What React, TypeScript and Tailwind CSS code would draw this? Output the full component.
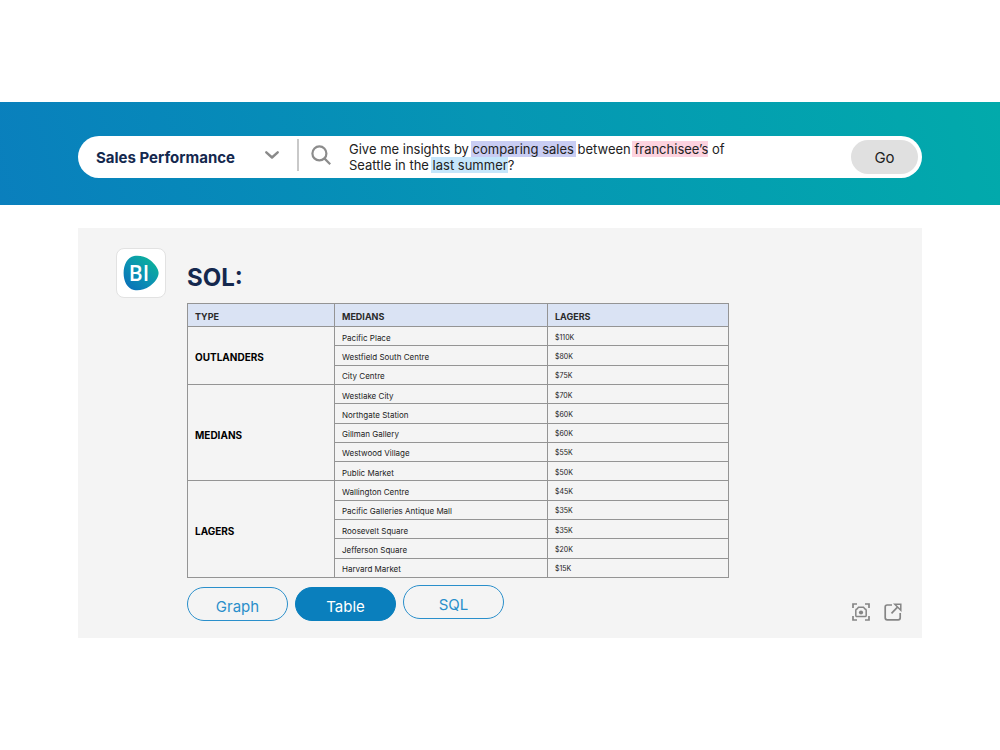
const groups = [
  {
    name: "OUTLANDERS",
    rows: [
      ["Pacific Place", "$110K"],
      ["Westfield South Centre", "$80K"],
      ["City Centre", "$75K"],
    ],
  },
  {
    name: "MEDIANS",
    rows: [
      ["Westlake City", "$70K"],
      ["Northgate Station", "$60K"],
      ["Gillman Gallery", "$60K"],
      ["Westwood Village", "$55K"],
      ["Public Market", "$50K"],
    ],
  },
  {
    name: "LAGERS",
    rows: [
      ["Wallington Centre", "$45K"],
      ["Pacific Galleries Antique Mall", "$35K"],
      ["Roosevelt Square", "$35K"],
      ["Jefferson Square", "$20K"],
      ["Harvard Market", "$15K"],
    ],
  },
];

function QueryBox() {
  return (
    <div
      role="textbox"
      aria-label="Question"
      aria-multiline="true"
      contentEditable
      suppressContentEditableWarning
      spellCheck={false}
      className="w-full max-w-[400px] text-[13px] leading-4 text-[#222] outline-none"
    >
      Give me insights by{" "}
      <mark className="bg-[#c9cdf3] text-inherit shadow-[-2px_0_0_#c9cdf3,2px_0_0_#c9cdf3]">
        comparing sales
      </mark>{" "}
      between{" "}
      <mark className="bg-[#fdd3df] text-inherit shadow-[-2px_0_0_#fdd3df]">franchisee’s</mark> of
      Seattle in the{" "}
      <mark className="bg-[#c5e6fb] text-inherit shadow-[-2px_0_0_#c5e6fb]">last summer</mark>?
    </div>
  );
}

function SearchBar() {
  return (
    <header className="bg-linear-75 from-[#0a7fbd] via-[#0696b4] to-[#02aaab] px-[78px] pt-[34px] pb-[27px]">
      <form
        onSubmit={(e) => e.preventDefault()}
        className="flex h-[42px] items-center rounded-full bg-white pr-1 pl-[18px]"
      >
        <div className="grid w-[183px] shrink-0 items-center">
          <select
            aria-label="Report"
            className="col-start-1 row-start-1 w-full appearance-none bg-transparent pt-0.5 text-[15px] leading-5 font-bold text-[#14284e] outline-none"
          >
            <option>Sales Performance</option>
          </select>
          <svg
            aria-hidden="true"
            viewBox="0 0 14 8"
            className="pointer-events-none col-start-1 row-start-1 mb-1 h-2 w-3.5 justify-self-end"
            fill="none"
            stroke="#8a8a8a"
            strokeWidth="2.4"
            strokeLinecap="round"
            strokeLinejoin="round"
          >
            <path d="M1.3 1.3 7 6.5 12.7 1.3" />
          </svg>
        </div>
        <div className="mb-1 ml-[18px] h-8 w-0.5 shrink-0 bg-[#c9c9c9]" />
        <svg
          aria-hidden="true"
          viewBox="0 0 20 20"
          className="mr-[18px] mb-1 ml-3 h-5 w-5 shrink-0"
          fill="none"
          stroke="#8c8c8c"
          strokeWidth="2.2"
        >
          <circle cx="8.4" cy="8.4" r="7" />
          <path d="m13.4 13.4 5.8 5.8" />
        </svg>
        <div className="min-w-0 flex-1">
          <QueryBox />
        </div>
        <button
          type="submit"
          className="h-[34px] w-[67px] shrink-0 rounded-full bg-[#e0e0e0] pt-0.5 text-[15px] text-[#222]"
        >
          Go
        </button>
      </form>
    </header>
  );
}

function Logo() {
  return (
    <div className="flex h-[50px] w-[50px] shrink-0 items-center justify-center rounded-lg border border-[#e2e2e2] bg-white">
      <svg viewBox="0 0 36 36" className="h-9 w-9" role="img" aria-label="BI">
        <defs>
          <linearGradient id="blob" x1="0.1" y1="0.9" x2="0.8" y2="0.1">
            <stop offset="0" stopColor="#0a72b8" />
            <stop offset="0.5" stopColor="#0b92b3" />
            <stop offset="1" stopColor="#0cb09b" />
          </linearGradient>
        </defs>
        <path
          d="M11 1C16 0.2 22 1.2 27 5C32 9 35.6 14 35.6 18C35.6 22 32 27.5 27 31C21.5 34.8 15.5 36 11 35C4 33.5 0.6 26 0.6 18C0.6 9.5 4.5 2.2 11 1Z"
          fill="url(#blob)"
        />
        <text
          x="16"
          y="25.5"
          textAnchor="middle"
          fill="#fff"
          className="font-['Open_Sans',sans-serif] text-[21px] font-semibold"
        >
          BI
        </text>
      </svg>
    </div>
  );
}

function SalesTable() {
  return (
    <table className="h-[275px] w-full max-w-[542px] table-fixed border-collapse text-left text-[#222]">
      <colgroup>
        <col className="w-[147px]" />
        <col className="w-[213px]" />
        <col />
      </colgroup>
      <thead>
        <tr className="h-[23px] bg-[#dae3f4] text-[9px] leading-3 font-bold text-[#2a2a2a]">
          {["TYPE", "MEDIANS", "LAGERS"].map((head) => (
            <th key={head} scope="col" className="border border-[#949494] px-[7px] pt-1">
              {head}
            </th>
          ))}
        </tr>
      </thead>
      {groups.map((group) => (
        <tbody key={group.name}>
          {group.rows.map(([place, value], i) => (
            <tr key={place} className="leading-[10px]">
              {i === 0 && (
                <th
                  scope="rowgroup"
                  rowSpan={group.rows.length}
                  className="border border-[#949494] px-[7px] pt-1 text-[10px] leading-3 font-bold text-black"
                >
                  {group.name}
                </th>
              )}
              <td className="border border-[#949494] px-[7px] pt-[3px] text-[8px]">{place}</td>
              <td className="border border-[#949494] px-[7px] pt-[3px] text-[7px]">{value}</td>
            </tr>
          ))}
        </tbody>
      ))}
    </table>
  );
}

export default function App() {
  return (
    <div className="min-h-screen bg-white pt-[102px] pb-28 font-['Inter','Liberation_Sans',sans-serif]">
      <SearchBar />
      <main className="mx-[78px] mt-[23px] flex items-start gap-[21px] bg-[#f4f4f4] pt-5 pr-5 pb-[17px] pl-[38px]">
        <Logo />
        <div className="min-w-0 flex-1">
          <h1 className="mt-3.5 mb-[9px] text-2xl leading-8 font-bold text-[#14284e]">SOL:</h1>
          <SalesTable />
          <div className="mt-[7px] flex items-end justify-between">
            <div className="flex items-start gap-[7px] text-[15px] leading-5">
              <button className="mt-0.5 h-[34px] w-[101px] rounded-full border border-[#2a8fcb] pt-1.5 text-[#2a8fcb]">
                Graph
              </button>
              <button
                aria-pressed="true"
                className="mt-0.5 h-[34px] w-[101px] rounded-full border border-[#0a7fbd] bg-[#0a7fbd] pt-1.5 text-white"
              >
                Table
              </button>
              <button className="h-[34px] w-[101px] rounded-full border border-[#2a8fcb] pt-1.5 text-[#2a8fcb]">
                SQL
              </button>
            </div>
            <div className="flex gap-[14px] text-[#858585]">
              <button aria-label="Capture">
                <svg
                  viewBox="0 0 18 18"
                  className="h-[18px] w-[18px]"
                  fill="none"
                  stroke="currentColor"
                  strokeWidth="1.7"
                >
                  <path d="M1 5V1h4M13 1h4v4M17 13v4h-4M5 17H1v-4" />
                  <path
                    d="M5 6 6.5 4.300h5L13 6c.8 0 1.200.5 1.200 1.200v5.200c0 .8-.5 1.200-1.200 1.200H5c-.8 0-1.200-.5-1.200-1.200V7.200C3.800 6.500 4.200 6 5 6Z"
                    strokeWidth="1.5"
                  />
                  <circle cx="9" cy="9.500" r="2.100" fill="currentColor" stroke="none" />
                </svg>
              </button>
              <button aria-label="Open in new window">
                <svg
                  viewBox="0 0 18 18"
                  className="h-[18px] w-[18px]"
                  fill="none"
                  stroke="currentColor"
                  strokeWidth="1.7"
                >
                  <path d="M8 2H3.200C2 2 1.200 2.800 1.200 4v10.800c0 1.200.8 2 2 2h11c1.200 0 2-.8 2-2V10" />
                  <path d="M7.500 10.300 13.500 4.200" />
                  <path d="M10.800 1.200h6v6Z" strokeWidth="1.5" />
                </svg>
              </button>
            </div>
          </div>
        </div>
      </main>
    </div>
  );
}
